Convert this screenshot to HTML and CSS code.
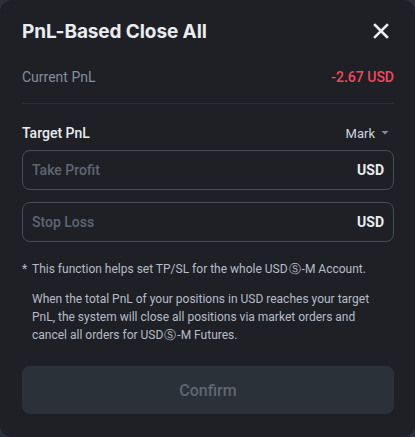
FILE: index.html
```html
<!DOCTYPE html>
<html>
<head>
<meta charset="utf-8">
<link rel="stylesheet" href="styles.css">
</head>
<body>
<div class="modal">
  <div class="header">
    <h1 class="title">PnL-Based Close All</h1>
    <svg class="close" width="16" height="16" viewBox="0 0 16 16"><path d="M2 2L14 14M14 2L2 14" stroke="#eaecef" stroke-width="2.6" stroke-linecap="square"/></svg>
  </div>
  <div class="row current">
    <span class="label">Current PnL</span>
    <span class="loss">-2.67 USD</span>
  </div>
  <div class="divider"></div>
  <div class="row target">
    <span class="label-strong">Target PnL</span>
    <span class="mark">Mark <svg width="8" height="6" viewBox="0 0 8 6"><path d="M0.5 1h7L4 4.5z" fill="#848e9c"/></svg></span>
  </div>
  <div class="field"><span class="placeholder">Take Profit</span><span class="unit">USD</span></div>
  <div class="field"><span class="placeholder">Stop Loss</span><span class="unit">USD</span></div>
  <div class="note">
    <span class="star">*</span>
    <div class="note-body">
      <p>This function helps set TP/SL for the whole USD<span class="cs">Ⓢ</span>-M Account.</p>
      <p class="para">When the total PnL of your positions in USD reaches your target PnL, the system will close all positions via market orders and cancel all orders for USD<span class="cs">Ⓢ</span>-M Futures.</p>
    </div>
  </div>
  <div class="button">Confirm</div>
</div>
</body>
</html>
```
FILE: styles.css
```css
html, body {
  margin: 0;
  padding: 0;
  background: #2b2f36;
}
body {
  width: 415px;
  height: 437px;
  font-family: "Roboto", "Noto Sans", sans-serif;
}
.modal {
  box-sizing: border-box;
  width: 415px;
  height: 437px;
  background: #1e2026;
  border-radius: 12px;
  padding: 16px 21px 0 22px;
  display: flex;
  flex-direction: column;
}
.header {
  display: flex;
  align-items: center;
  justify-content: space-between;
  height: 30px;
}
.title {
  margin: 0;
  font-family: "Inter", "Noto Sans", sans-serif;
  font-size: 19px;
  font-weight: 700;
  color: #eaecef;
  letter-spacing: -0.1px;
}
.close {
  margin-right: 5px;
}
.row {
  display: flex;
  justify-content: space-between;
  align-items: center;
}
.current {
  margin-top: 17px;
  height: 28px;
}
.label {
  font-size: 14px;
  color: #848e9c;
}
.loss {
  font-size: 14px;
  font-weight: 500;
  color: #f6465d;
}
.divider {
  height: 1px;
  background: #2b3139;
  margin-top: 12px;
}
.target {
  margin-top: 18px;
  height: 22px;
}
.label-strong {
  font-size: 14px;
  font-weight: 500;
  color: #eaecef;
}
.mark {
  font-size: 13px;
  color: #d0d4da;
  margin-right: 5px;
  display: flex;
  align-items: center;
  gap: 6px;
}
.field {
  box-sizing: border-box;
  height: 40px;
  border: 1px solid #474d57;
  border-radius: 8px;
  display: flex;
  align-items: center;
  justify-content: space-between;
  padding: 0 9px 0 9px;
  margin-top: 6px;
}
.field + .field {
  margin-top: 12px;
}
.placeholder {
  font-size: 14px;
  font-weight: 500;
  color: #5e6673;
}
.unit {
  font-size: 14px;
  font-weight: 700;
  color: #eaecef;
}
.note {
  display: flex;
  margin-top: 18px;
  font-size: 12px;
  line-height: 18px;
  color: #b7bdc6;
}
.star {
  width: 10px;
  flex: none;
}
.cs {
  display: inline-block;
  font-family: "DejaVu Sans", sans-serif;
  font-size: 11.5px;
  line-height: 12px;
  margin: 0 1px;
}
.note-body p {
  margin: 0;
}
.note-body .para {
  margin-top: 12px;
  max-width: 344px;
}
.button {
  margin-top: 22px;
  height: 48px;
  border-radius: 8px;
  background: #2b3139;
  color: #5e6673;
  font-size: 16px;
  font-weight: 500;
  display: flex;
  align-items: center;
  justify-content: center;
}
```
